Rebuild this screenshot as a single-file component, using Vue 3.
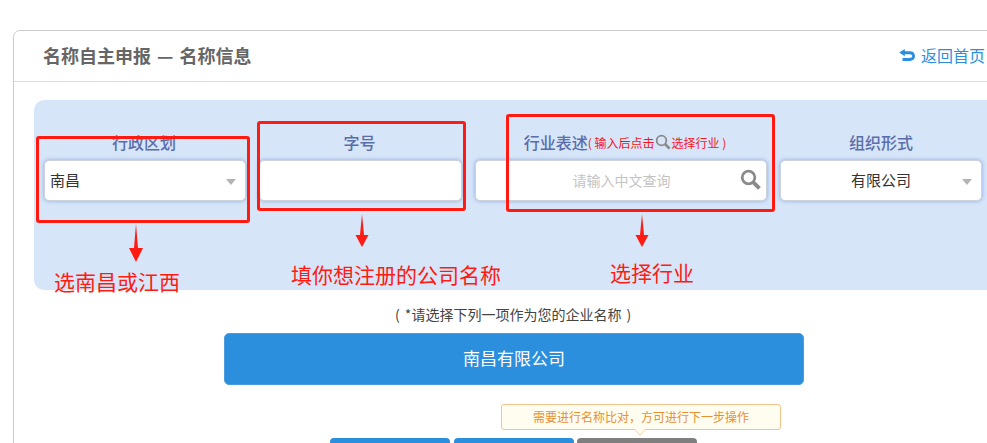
<script setup>
const buttons = [
  { id: 'a', cls: 'step-btn' },
  { id: 'b', cls: 'step-btn' },
  { id: 'c', cls: 'step-btn off' }
];
</script>

<template>
  <div class="page">
    <div class="card">
      <header class="card-head">
        <h1>名称自主申报 — 名称信息</h1>
        <a class="back">
          <svg width="16" height="14" viewBox="0 0 16 14">
            <path d="M5.800 1 L0.200 4.600 L5.800 8.200 V6.200 H10.500 C12.400 6.200 13.200 7 13.200 8.100 C13.200 9.300 12.400 10.100 10.500 10.100 H3.500 V13 H10.800 C14.200 13 16 11 16 8.100 C16 5.200 14.200 3.200 10.800 3.200 H5.800 Z" fill="#2b8fdd" />
          </svg>
          <span>返回首页</span>
        </a>
      </header>

      <section class="panel">
        <div class="fields">
          <div class="field">
            <label class="first">行政区划</label>
            <div class="box select left">南昌<i class="caret"></i></div>
          </div>
          <div class="field">
            <label class="first">字号</label>
            <div class="box"></div>
          </div>
          <div class="field">
            <label class="wide">行业表述<small class="note">( 输入后点击<svg class="glass" width="16" height="16" viewBox="0 0 16 16"><circle cx="6.5" cy="6.5" r="4.8" fill="none" stroke="#8a8a8a" stroke-width="1.8" /><path d="M10 10 L14.6 14.6" stroke="#8a8a8a" stroke-width="2.6" /></svg>选择行业 )</small></label>
            <div class="box query">
              <span class="placeholder">请输入中文查询</span>
              <svg class="glass-lg" width="21" height="21" viewBox="0 0 16 16"><circle cx="6.5" cy="6.5" r="4.8" fill="none" stroke="#8a8a8a" stroke-width="2.1" /><path d="M10 10 L14.800 14.800" stroke="#8a8a8a" stroke-width="3" /></svg>
            </div>
          </div>
          <div class="field">
            <label>组织形式</label>
            <div class="box select center">有限公司<i class="caret"></i></div>
          </div>
        </div>
      </section>

      <p class="hint">( *请选择下列一项作为您的企业名称 )</p>
      <button class="name-btn">南昌有限公司</button>

      <div class="tip">需要进行名称比对，方可进行下一步操作</div>
      <div class="steps">
        <button v-for="b in buttons" :key="b.id" :class="b.cls"></button>
      </div>
    </div>

    <!-- red markup drawn over the screenshot -->
    <div class="mark mark-1"></div>
    <div class="mark mark-2"></div>
    <div class="mark mark-3"></div>

    <svg class="arrow arrow-1" width="16" height="38" viewBox="0 0 16 38"><path d="M8 0 L10 24 L15 24 L8 38 L1 24 L6 24 Z" fill="#ff1a12" /></svg>
    <svg class="arrow arrow-2" width="14" height="33" viewBox="0 0 14 33"><path d="M7 0 L9 21 L13.500 21 L7 33 L0.500 21 L5 21 Z" fill="#ff1a12" /></svg>
    <svg class="arrow arrow-3" width="14" height="33" viewBox="0 0 14 33"><path d="M7 0 L9 21 L13.500 21 L7 33 L0.500 21 L5 21 Z" fill="#ff1a12" /></svg>

    <span class="say say-1">选南昌或江西</span>
    <span class="say say-2">填你想注册的公司名称</span>
    <span class="say say-3">选择行业</span>
  </div>
</template>

<style>
html, body {
  margin: 0;
  background: #fff;
}
</style>

<style scoped>
.page {
  position: relative;
  width: 987px;
  height: 443px;
  overflow: hidden;
  padding: 30px 0 0 13px;
  box-sizing: border-box;
  font-family: "Noto Sans CJK SC", "Liberation Sans", sans-serif;
}

.card {
  width: 1040px;
  height: 500px;
  box-sizing: border-box;
  border: 1px solid #ccc;
  border-radius: 7px;
  background: #fff;
}

.card-head {
  display: flex;
  align-items: center;
  justify-content: space-between;
  height: 50px;
  padding: 0 67px 0 29px;
  border-bottom: 1px solid #ddd;
}

.card-head h1 {
  margin: -3px 0 0;
  font-size: 18px;
  font-weight: 700;
  color: #666;
  word-spacing: 2px;
}

.back {
  display: flex;
  align-items: center;
  gap: 6px;
  margin-top: -3px;
  font-size: 16px;
  color: #2b8fdd;
}

.panel {
  height: 190px;
  margin: 18px 0 0 20px;
  padding: 0 0 0 10px;
  background: #d6e5f8;
  border-radius: 10px 0 0 10px;
}

.fields {
  display: grid;
  grid-template-columns: 202px 203px 292px 202px;
  column-gap: 13px;
  padding-top: 30px;
}

.field {
  display: flex;
  flex-direction: column;
}

.field label {
  display: flex;
  align-items: center;
  justify-content: center;
  height: 24px;
  padding-bottom: 6px;
  font-size: 16px;
  font-weight: 500;
  color: #5a6dab;
  white-space: nowrap;
}

.field label.first {
  padding-right: 2px;
}

.field label.wide {
  padding-left: 8px;
}

.note {
  display: flex;
  align-items: center;
  font-size: 12px;
  font-weight: 400;
  color: #f5141c;
  white-space: pre;
}

.glass {
  margin: 0 1px 0 0;
}

.box {
  position: relative;
  display: flex;
  align-items: center;
  height: 41px;
  box-sizing: border-box;
  padding-bottom: 2px;
  background: #fff;
  border: 1px solid #ccd3dd;
  border-radius: 5px;
  box-shadow: 0 0 4px #8aa8e0;
  font-size: 15px;
  color: #333;
}

.select.left {
  padding-left: 5px;
}

.select.center {
  justify-content: center;
}

.caret {
  position: absolute;
  right: 9px;
  top: 18px;
  border-left: 5px solid transparent;
  border-right: 5px solid transparent;
  border-top: 6px solid #b4b4b4;
}

.query {
  justify-content: center;
}

.placeholder {
  margin-left: 1px;
  font-size: 14px;
  color: #c4c4c4;
}

.glass-lg {
  position: absolute;
  right: 5px;
  top: 8px;
}

.hint {
  margin: 15px 0 0 0;
  padding-left: 381px;
  height: 18px;
  line-height: 18px;
  font-size: 14px;
  color: #444;
  white-space: nowrap;
  word-spacing: 2px;
}

.name-btn {
  display: block;
  width: 580px;
  height: 52px;
  padding-bottom: 4px;
  margin: 10px 0 0 210px;
  border: 1px solid #4a9de0;
  border-radius: 5px;
  background: #2b8fdd;
  color: #fff;
  font-family: inherit;
  font-size: 17px;
}

.tip {
  position: relative;
  width: 280px;
  height: 26px;
  margin: 19px 0 0 487px;
  box-sizing: border-box;
  border: 1px solid #f5c48c;
  border-radius: 3px;
  background: #fffcf0;
  text-align: center;
  line-height: 24px;
  font-size: 12px;
  color: #e8902f;
}

.tip::after {
  content: "";
  position: absolute;
  left: 134px;
  bottom: -5px;
  width: 7px;
  height: 7px;
  background: #fffcf0;
  border-right: 1px solid #f9dcb8;
  border-bottom: 1px solid #f9dcb8;
  transform: rotate(45deg);
}

.steps {
  display: flex;
  gap: 4px;
  margin: 8px 0 0 316px;
}

.step-btn {
  width: 120px;
  height: 38px;
  border: 0;
  border-radius: 4px;
  background: #2b8fdd;
}

.step-btn.off {
  margin-left: -1px;
  background: #7f7f7f;
}

.mark {
  position: absolute;
  box-sizing: border-box;
  border: 3px solid #ff1a12;
  border-radius: 3px;
}

.mark-1 { left: 36px; top: 136px; width: 214px; height: 87px; }
.mark-2 { left: 257px; top: 121px; width: 209px; height: 90px; }
.mark-3 { left: 506px; top: 114px; width: 269px; height: 98px; }

.arrow {
  position: absolute;
}

.arrow-1 { left: 128px; top: 224px; }
.arrow-2 { left: 355px; top: 214px; }
.arrow-3 { left: 635px; top: 214px; }

.say {
  position: absolute;
  font-size: 21px;
  line-height: 28px;
  color: #ff1a12;
  white-space: nowrap;
}

.say-1 { left: 54px; top: 267px; }
.say-2 { left: 291px; top: 260px; }
.say-3 { left: 610px; top: 258px; }
</style>
